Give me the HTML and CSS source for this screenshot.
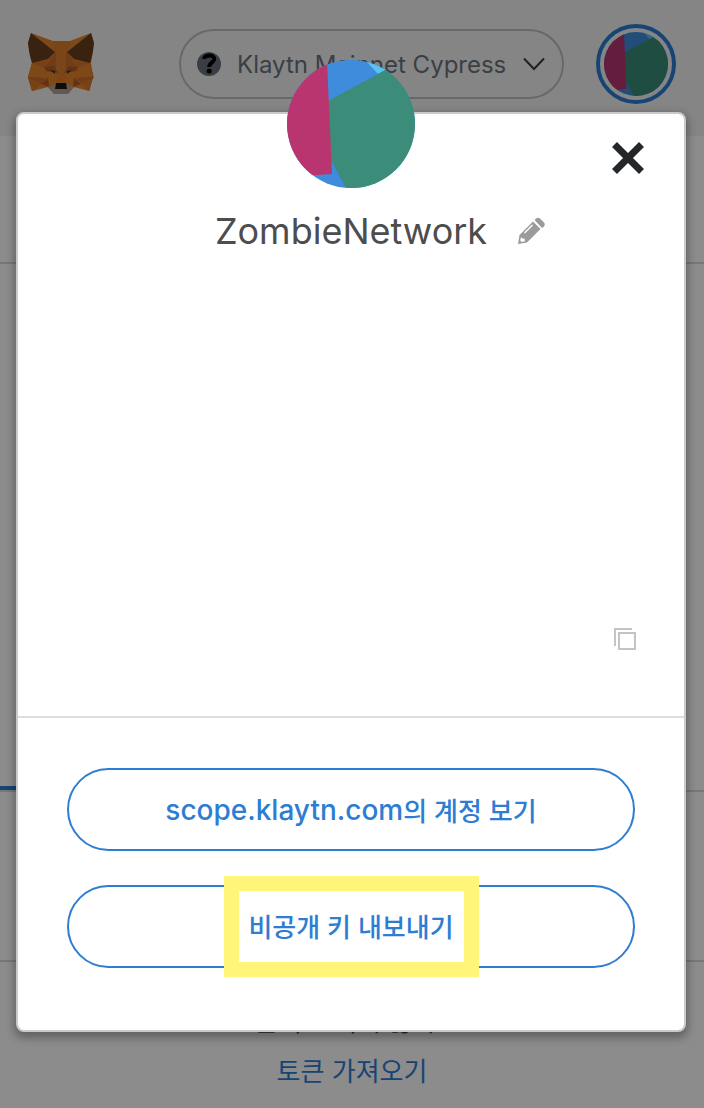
FILE: index.html
```html
<!DOCTYPE html>
<html lang="ko">
<head>
<meta charset="utf-8">
<meta name="viewport" content="width=device-width, initial-scale=1">
<title>ZombieNetwork</title>
<link rel="stylesheet" href="styles.css">
</head>
<body>
<svg class="symbols" aria-hidden="true">
  <symbol id="identicon" viewBox="0 0 128 128">
    <path fill="#3f8cdc" d="M0 0h128v128H0z"/>
    <path fill="#55c3f0" d="M78 0l13 14 12-6V0z"/>
    <path fill="#3b8c79" d="M41 41L128-6v134H59L44 100z"/>
    <path fill="#b93570" d="M0-10h39.500L45 114l-45 3z"/>
  </symbol>
</svg>
<div class="page">
  <header class="topbar">
    <svg class="fox" viewBox="0 0 66 62" role="img" aria-label="MetaMask">
      <path fill="#e5832b" d="M3 0l22 8h17L63 0l3 10-3 20 2 14-4 14-15-4-6 7H26l-6-7-15 4L0 44l4-14L0 10z"/>
      <path fill="#d7772c" d="M4 30l16-3-4 8 4 11-20-1zM62 30l-16-3 4 8-4 11 20-1z"/>
      <path fill="#e5832b" d="M0 44l4-14 12 5 4 10zM65 44l-3-14-12 5-4 10z"/>
      <path fill="#cd6e2a" d="M0 44l18 1-4 5-10 8zM65 44l-17 1 5 5 8 8z"/>
      <path fill="#d97829" d="M0 45l13 5-9 8zM65 45l-12 5 8 8z"/>
      <path fill="#cd7029" d="M27 19L16 35l14 0 3 13 3-13h14L39 19 42 8H25z"/>
      <path fill="#df7f2b" d="M25 8h17l-4 12-1 29h-8l-1-29z"/>
      <path fill="#b85c2b" d="M16 34l10-1 4 7-12-2zM50 34l-10-1-4 7 12-2zM20 45l-7 6 8 3zM46 45l7 6-8 3z"/>
      <path fill="#6b3f20" d="M3 0l24 19-7 7-16 4-2-7-1-5-1-8zM63 0L39 19l7 7 16 4 2-7 1-5 1-8z"/>
      <path fill="#b3a396" d="M20 54l8-3h10l8 3-7 7H27z"/>
      <path fill="#25384a" d="M22 37l5 1v3zM44 37l-5 1v3z"/>
      <path fill="#171717" d="M28 50h10l1 6H27z"/>
    </svg>
    <button class="network" type="button">
      <svg class="network-mark" viewBox="0 0 24 24" aria-hidden="true"><circle cx="12" cy="12" r="12" fill="#6b717c"/><path d="M7 7C7.500 2.200 17.500 2.200 17.300 7 17.200 10.500 12.200 10.500 12.200 15" fill="none" stroke="#000" stroke-width="4"/><circle cx="12.200" cy="19" r="2.500" fill="#000"/></svg>
      <span class="network-name">Klaytn Mainnet Cypress</span>
      <svg class="chevron" viewBox="0 0 22 14" aria-hidden="true"><path d="M1 1.500l10 10.500L21 1.500" fill="none" stroke="#3d3d3d" stroke-width="2"/></svg>
    </button>
    <button class="account" type="button" aria-label="ZombieNetwork"><svg class="round"><use href="#identicon"/></svg></button>
  </header>
  <main class="wallet">
    <div class="account-row"></div>
    <div class="balance"></div>
    <div class="tabs"><div class="tab-active"></div></div>
    <div class="assets"></div>
    <footer class="tokens">
      <span class="hint">토큰이 보이지 않나요?</span>
      <a class="import" href="#">토큰 가져오기</a>
    </footer>
  </main>
</div>
<div class="overlay">
  <section class="modal" role="dialog" aria-label="ZombieNetwork">
    <div class="details">
      <svg class="avatar round" aria-hidden="true"><use href="#identicon"/></svg>
      <button class="close" type="button" aria-label="닫기"><svg viewBox="0 0 32 32"><path d="M2.500 2.500l27 27M29.500 2.500l-27 27" stroke="#24272a" stroke-width="7"/></svg></button>
      <div class="name-row">
        <h1 class="name">ZombieNetwork</h1>
        <button class="edit" type="button" aria-label="편집"><svg viewBox="0 0 28 28"><path fill="#9b9b9b" fill-rule="evenodd" d="M1 27l1.500-9L16 4.500l7.500 7.500L10 25.500zM4 20l-.8 3.500 1.500 1.500 3.300-.8-.5-2.700-2.500 0zM8 16.500l8-8-1-1-8 8zM17.500 3l1.500-1.500q2-1.500 4 0l4 4q1.500 2 0 4L25 11z"/></svg></button>
      </div>
      <button class="copy" type="button" aria-label="복사"><svg viewBox="0 0 22 22" fill="none" stroke="#c4c4c4" stroke-width="2"><path d="M1 18V1h17M5 5h16v16H5z"/></svg></button>
    </div>
    <div class="actions">
      <button class="pill" type="button"><span class="domain">scope.klaytn.com</span>의 계정 보기</button>
      <button class="pill" type="button"><span class="marked">비공개 키 내보내기</span></button>
    </div>
  </section>
</div>
</body>
</html>
```
FILE: styles.css
```css
* { box-sizing: border-box; }
body {
  margin: 0;
  background: #fff;
  color: #4d4d4d;
  font-family: Inter, "Noto Sans CJK KR", sans-serif;
}
button {
  padding: 0;
  border: 0;
  background: none;
  color: inherit;
  font: inherit;
  cursor: pointer;
}
svg { display: block; }
.symbols { position: absolute; width: 0; height: 0; }
.round { width: 100%; height: 100%; border-radius: 50%; }

.page { min-height: 100vh; display: flex; flex-direction: column; overflow: hidden; }
.topbar {
  display: flex;
  align-items: center;
  justify-content: space-between;
  height: 136px;
  padding: 0 28px 8px;
  background: #f2f3f4;
}
.fox { width: 66px; height: 62px; }
.network {
  display: flex;
  align-items: center;
  width: 385px;
  height: 70px;
  margin-left: 53px;
  padding: 0 17px 0 16px;
  border: 2px solid #bbc0c5;
  border-radius: 35px;
  color: #6a737d;
  font-size: 24px;
}
.network-mark { width: 24px; height: 24px; margin-right: 16px; }
.network-name { flex: 1; text-align: left; white-space: nowrap; }
.chevron { width: 22px; height: 14px; }
.account {
  width: 80px;
  height: 80px;
  padding: 4px;
  border: 4px solid #2d7dd2;
  border-radius: 50%;
}

.wallet { flex: 1; display: flex; flex-direction: column; }
.account-row { height: 128px; border-bottom: 2px solid #d6d9dc; }
.balance { height: 522px; }
.tabs { height: 6px; border-bottom: 2px solid #d6d9dc; }
.tab-active { width: 50%; height: 4px; background: #2d7dd2; }
.assets { height: 170px; border-bottom: 2px solid #d6d9dc; }
.tokens {
  display: flex;
  flex-direction: column;
  align-items: center;
  padding-top: 42px;
  font-size: 26px;
  line-height: 36px;
  gap: 14px;
}
.import { color: #2d7dd2; text-decoration: none; }

.overlay {
  position: absolute;
  inset: 0;
  padding: 112px 18px 0 16px;
  background: rgba(0, 0, 0, 0.45);
}
.modal {
  border: 2px solid #cacaca;
  border-radius: 8px;
  background: #fff;
  box-shadow: 0 4px 8px 2px rgba(0, 0, 0, 0.3);
}
.details {
  position: relative;
  display: flex;
  flex-direction: column;
  justify-content: space-between;
  height: 604px;
  padding: 91px 48px 66px;
  border-bottom: 2px solid #dedede;
}
.avatar {
  position: absolute;
  top: -54px;
  left: calc(50% - 64px);
  width: 128px;
  height: 128px;
}
.close { position: absolute; top: 28px; right: 40px; width: 32px; height: 32px; }
.name-row {
  display: grid;
  grid-template-columns: 1fr auto 1fr;
  align-items: center;
  column-gap: 30px;
}
.name { grid-column: 2; margin: 0; font-size: 36px; font-weight: 400; line-height: 52px; }
.edit { width: 28px; height: 28px; }
.copy { align-self: flex-end; width: 22px; height: 22px; }
.actions {
  display: flex;
  flex-direction: column;
  gap: 34px;
  padding: 50px 49px 62px;
}
.pill {
  display: flex;
  align-items: center;
  justify-content: center;
  height: 83px;
  border: 2px solid #2d7dd2;
  border-radius: 42px;
  color: #2d7dd2;
  font-size: 26px;
  font-weight: 500;
  white-space: nowrap;
}
.domain { font-size: 28px; }
.marked {
  display: flex;
  align-items: center;
  justify-content: center;
  width: 255px;
  height: 101px;
  flex-shrink: 0;
  padding-bottom: 2px;
  border: 15px solid #fff579;
  background: #fff;
}
```
